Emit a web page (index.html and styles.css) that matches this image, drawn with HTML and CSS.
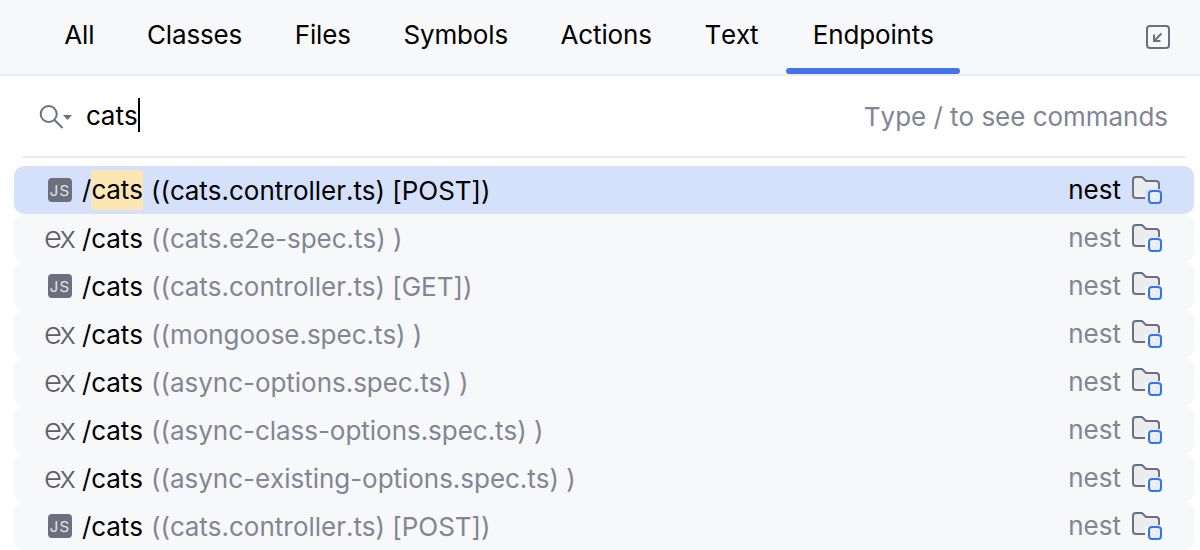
FILE: index.html
```html
<!DOCTYPE html>
<html lang="en">
<head>
    <meta charset="UTF-8">
    <title>Search Everywhere</title>
    <link rel="stylesheet" href="styles.css">
</head>
<body>
    <svg class="defs" width="0" height="0">
        <symbol id="folder" viewBox="0 0 32 30">
            <path d="M2 5a3 3 0 0 1 3-3h6l4 4h10a3 3 0 0 1 3 3v6H14v8H5a3 3 0 0 1-3-3z" fill="#ebecf0"/>
            <path d="M14 23H5a3 3 0 0 1-3-3V5a3 3 0 0 1 3-3h6l4 4h10a3 3 0 0 1 3 3v5" fill="none" stroke="#6c707e" stroke-width="2"/>
            <rect x="18" y="16" width="12" height="12" rx="3" fill="#e7effd" stroke="#3574f0" stroke-width="2"/>
        </symbol>
    </svg>

    <header class="tabs">
        <nav class="tab-list">
            <span class="tab">All</span>
            <span class="tab">Classes</span>
            <span class="tab">Files</span>
            <span class="tab">Symbols</span>
            <span class="tab">Actions</span>
            <span class="tab">Text</span>
            <span class="tab active">Endpoints</span>
        </nav>
        <svg class="collapse" width="26" height="26" viewBox="0 0 26 26" fill="none" stroke="#6c707e" stroke-width="2">
            <rect x="2" y="2" width="22" height="22" rx="3"/>
            <path d="M16.500 9.500l-7 7M9 10.500v6.500h6.500"/>
        </svg>
    </header>

    <div class="search">
        <svg class="search-icon" width="34" height="28" viewBox="0 0 34 28" fill="none">
            <circle cx="9.700" cy="12" r="8" stroke="#6c707e" stroke-width="2"/>
            <path d="M15.500 18l8 8" stroke="#6c707e" stroke-width="2"/>
            <path d="M24 13h9l-4.500 5z" fill="#6c707e"/>
        </svg>
        <span class="query">cats</span>
        <span class="caret"></span>
        <span class="hint">Type / to see commands</span>
    </div>

    <div class="results">
        <div class="row selected">
            <span class="icon-js">JS</span>
            <span class="path">/<mark>cats</mark></span>
            <span class="detail">((cats.controller.ts) [POST])</span>
            <span class="module">nest</span>
            <svg class="icon-folder"><use href="#folder"/></svg>
        </div>
        <div class="row">
            <span class="icon-ex">ex</span>
            <span class="path">/cats</span>
            <span class="detail">((cats.e2e-spec.ts) )</span>
            <span class="module">nest</span>
            <svg class="icon-folder"><use href="#folder"/></svg>
        </div>
        <div class="row">
            <span class="icon-js">JS</span>
            <span class="path">/cats</span>
            <span class="detail">((cats.controller.ts) [GET])</span>
            <span class="module">nest</span>
            <svg class="icon-folder"><use href="#folder"/></svg>
        </div>
        <div class="row">
            <span class="icon-ex">ex</span>
            <span class="path">/cats</span>
            <span class="detail">((mongoose.spec.ts) )</span>
            <span class="module">nest</span>
            <svg class="icon-folder"><use href="#folder"/></svg>
        </div>
        <div class="row">
            <span class="icon-ex">ex</span>
            <span class="path">/cats</span>
            <span class="detail">((async-options.spec.ts) )</span>
            <span class="module">nest</span>
            <svg class="icon-folder"><use href="#folder"/></svg>
        </div>
        <div class="row">
            <span class="icon-ex">ex</span>
            <span class="path">/cats</span>
            <span class="detail">((async-class-options.spec.ts) )</span>
            <span class="module">nest</span>
            <svg class="icon-folder"><use href="#folder"/></svg>
        </div>
        <div class="row">
            <span class="icon-ex">ex</span>
            <span class="path">/cats</span>
            <span class="detail">((async-existing-options.spec.ts) )</span>
            <span class="module">nest</span>
            <svg class="icon-folder"><use href="#folder"/></svg>
        </div>
        <div class="row">
            <span class="icon-js">JS</span>
            <span class="path">/cats</span>
            <span class="detail">((cats.controller.ts) [POST])</span>
            <span class="module">nest</span>
            <svg class="icon-folder"><use href="#folder"/></svg>
        </div>
    </div>
</body>
</html>
```

FILE: styles.css
```css
html, body {
    height: 100%;
    overflow: hidden;
}
body {
    margin: 0;
    background: white;
    color: #000;
    font-family: Inter, "Liberation Sans", sans-serif;
    font-size: 26px;
    font-kerning: none;
}
.defs {
    display: block;
}
.tabs {
    display: flex;
    align-items: center;
    justify-content: space-between;
    height: 74px;
    padding: 0 29px 0 38px;
    background: #f7f8fa;
    border-bottom: 2px solid #ebecf0;
}
.tab-list {
    display: flex;
    height: 100%;
}
.tab {
    position: relative;
    display: flex;
    align-items: center;
    height: 100%;
    padding: 0 26.3px 6px;
    box-sizing: border-box;
    letter-spacing: -0.15px;
}
.tab.active {
    margin-left: 1.5px;
    padding: 0 26.5px 6px;
}
.tab.active::after {
    content: "";
    position: absolute;
    left: 0;
    right: 0;
    bottom: 0;
    height: 6px;
    border-radius: 3px;
    background: #4174e6;
}
.collapse {
    display: block;
}
.search {
    display: flex;
    align-items: center;
    height: 80px;
    margin: 0 14px 0 22px;
    padding: 0 18px 0 17px;
    border-bottom: 2px solid #ebecf0;
}
.search-icon {
    margin-right: 13px;
}
.query {
    margin-top: -2px;
}
.caret {
    width: 2px;
    height: 34px;
    margin-top: -2px;
    background: #000;
}
.hint {
    margin-left: auto;
    color: #818594;
    letter-spacing: -0.03px;
}
.results {
    margin: 8px 6px 0 14px;
}
.row {
    display: flex;
    align-items: center;
    height: 48px;
    padding: 0 31px 0 32px;
    background: #f7f8fa;
    border-radius: 10px;
}
.row.selected {
    background: #d5e1fb;
}
.row.selected .detail,
.row.selected .module {
    color: #000;
}
.icon-js {
    display: flex;
    align-items: center;
    justify-content: center;
    flex: none;
    width: 24px;
    height: 24px;
    margin: 0 10px 0 2px;
    border-radius: 4px;
    background: #6c707e;
    color: #e4e5ea;
    font-size: 15px;
    letter-spacing: 1.2px;
}
.icon-ex {
    flex: none;
    width: 38px;
    margin-top: -3px;
    margin-left: -2px;
    color: #606165;
    font-size: 31px;
    font-weight: 300;
    line-height: 40px;
    letter-spacing: -2.5px;
}
.path {
    margin-right: 8px;
}
mark {
    display: inline-block;
    background: #fbe6b4;
    border-radius: 4px;
    color: inherit;
    line-height: 40px;
}
.detail {
    color: #818594;
    letter-spacing: -0.03px;
}
.module {
    margin-top: -2px;
    margin-left: auto;
    color: #818594;
}
.icon-folder {
    flex: none;
    width: 32px;
    height: 30px;
    margin-left: 10px;
}
```
